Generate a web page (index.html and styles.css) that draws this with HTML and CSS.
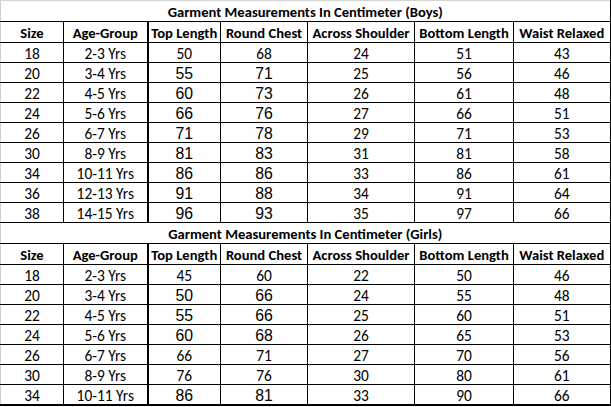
FILE: index.html
```html
<!DOCTYPE html>
<html>
<head>
<meta charset="utf-8">
<link rel="stylesheet" href="styles.css">
</head>
<body>
<table class="sheet">
  <colgroup>
    <col class="c1"><col class="c2"><col class="c3"><col class="c4"><col class="c5"><col class="c6"><col class="c7">
  </colgroup>
  <tbody>
    <tr class="title first"><td colspan="7">Garment Measurements In Centimeter (Boys)</td></tr>
    <tr class="head"><td>Size</td><td>Age-Group</td><td>Top Length</td><td>Round Chest</td><td>Across Shoulder</td><td>Bottom Length</td><td>Waist Relaxed</td></tr>
    <tr><td>18</td><td>2-3 Yrs</td><td>50</td><td>68</td><td>24</td><td>51</td><td>43</td></tr>
    <tr><td>20</td><td>3-4 Yrs</td><td class="ar">55</td><td class="ar">71</td><td>25</td><td>56</td><td>46</td></tr>
    <tr><td>22</td><td>4-5 Yrs</td><td class="ar">60</td><td class="ar">73</td><td>26</td><td>61</td><td>48</td></tr>
    <tr><td>24</td><td>5-6 Yrs</td><td class="ar">66</td><td class="ar">76</td><td>27</td><td>66</td><td>51</td></tr>
    <tr><td>26</td><td>6-7 Yrs</td><td class="ar">71</td><td class="ar">78</td><td>29</td><td>71</td><td>53</td></tr>
    <tr><td>30</td><td>8-9 Yrs</td><td class="ar">81</td><td class="ar">83</td><td>31</td><td>81</td><td>58</td></tr>
    <tr><td>34</td><td>10-11 Yrs</td><td class="ar">86</td><td class="ar">86</td><td>33</td><td>86</td><td>61</td></tr>
    <tr><td>36</td><td>12-13 Yrs</td><td class="ar">91</td><td class="ar">88</td><td>34</td><td>91</td><td>64</td></tr>
    <tr><td>38</td><td>14-15 Yrs</td><td class="ar">96</td><td class="ar">93</td><td>35</td><td>97</td><td>66</td></tr>
    <tr class="title"><td colspan="7">Garment Measurements In Centimeter (Girls)</td></tr>
    <tr class="head"><td>Size</td><td>Age-Group</td><td>Top Length</td><td>Round Chest</td><td>Across Shoulder</td><td>Bottom Length</td><td>Waist Relaxed</td></tr>
    <tr><td>18</td><td>2-3 Yrs</td><td>45</td><td>60</td><td>22</td><td>50</td><td>46</td></tr>
    <tr><td>20</td><td>3-4 Yrs</td><td class="ar">50</td><td class="ar">66</td><td>24</td><td>55</td><td>48</td></tr>
    <tr><td>22</td><td>4-5 Yrs</td><td class="ar">55</td><td class="ar">66</td><td>25</td><td>60</td><td>51</td></tr>
    <tr><td>24</td><td>5-6 Yrs</td><td class="ar">60</td><td class="ar">68</td><td>26</td><td>65</td><td>53</td></tr>
    <tr><td>26</td><td>6-7 Yrs</td><td>66</td><td>71</td><td>27</td><td>70</td><td>56</td></tr>
    <tr><td>30</td><td>8-9 Yrs</td><td>76</td><td>76</td><td>30</td><td>80</td><td>61</td></tr>
    <tr class="last"><td>34</td><td>10-11 Yrs</td><td class="ar">86</td><td class="ar">81</td><td>33</td><td>90</td><td>66</td></tr>
  </tbody>
</table>
</body>
</html>
```

FILE: styles.css
```css
html, body {
  margin: 0;
  padding: 0;
  background: #ffffff;
}

.sheet {
  border-collapse: collapse;
  table-layout: fixed;
  width: 610px;
  font-family: "Carlito", "Lato", "Liberation Sans", sans-serif;
  font-size: 15.4px;
  color: #000;
}

.c1 { width: 63px; }
.c2 { width: 84px; }
.c3 { width: 73px; }
.c4 { width: 87px; }
.c5 { width: 107px; }
.c6 { width: 99px; }
.c7 { width: 97px; }

.sheet td {
  border: 1px solid #000;
  padding: 0;
  height: 19px;
  line-height: 17px;
  text-align: center;
  vertical-align: bottom;
  white-space: nowrap;
  overflow: hidden;
}

.sheet td:first-child {
  border-left: 1px solid #cfcfcf;
}

.sheet td:nth-child(3) {
  border-left: 2px solid #000;
}

.sheet .title td {
  border-left: 1px solid #cfcfcf;
}

.sheet td:last-child {
  border-right: 2px solid #000;
}

.sheet .title td {
  font-weight: bold;
  font-size: 14.6px;
  height: 20px;
}

.sheet .first td {
  border-top: 1px solid #d4d4d4;
}

.sheet .head td {
  font-weight: bold;
  font-size: 14.6px;
  height: 20px;
}

.sheet .last td {
  border-bottom: 2px solid #000;
}

.sheet td.ar {
  font-family: "Liberation Sans", Arial, sans-serif;
  font-size: 15.8px;
}
```
